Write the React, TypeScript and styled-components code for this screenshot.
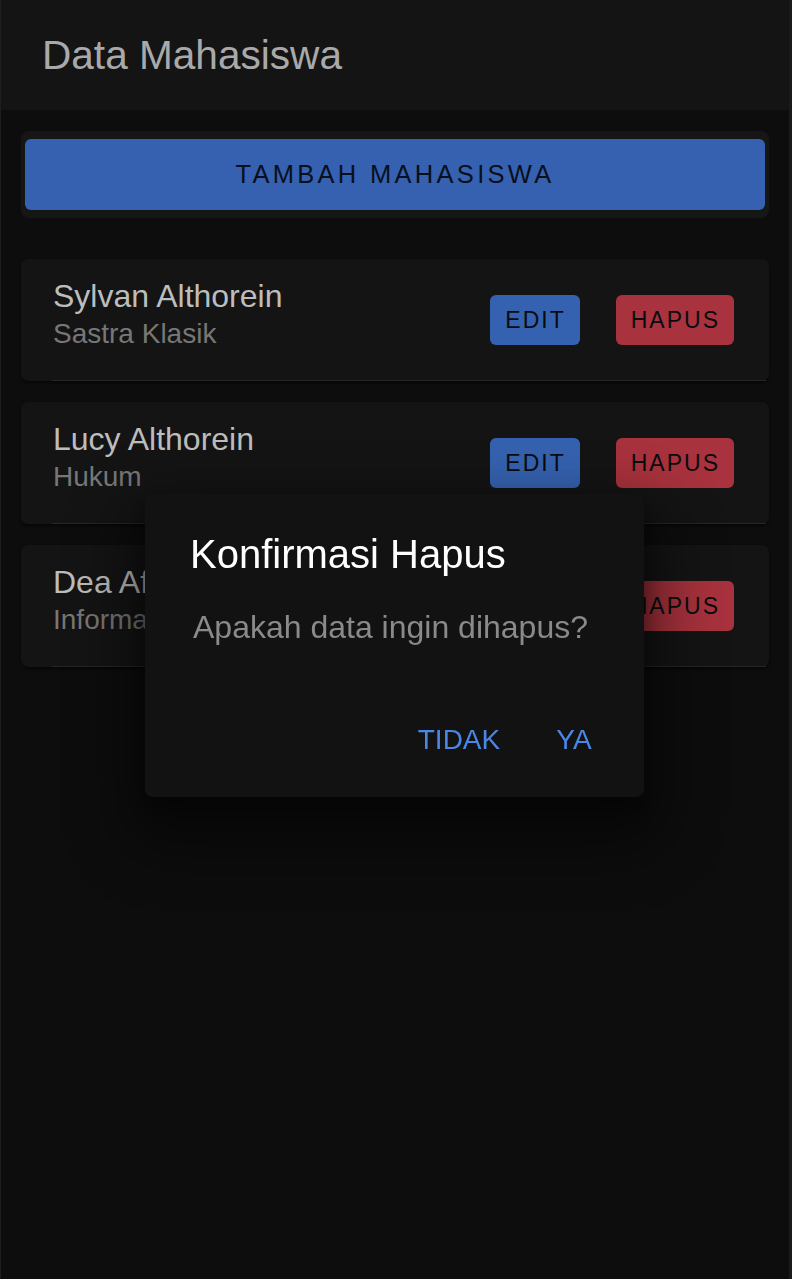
import React from "react";
import styled, { createGlobalStyle } from "styled-components";

const Global = createGlobalStyle`
  html, body { margin: 0; padding: 0; background: #0d0d0d; }
  body { font-family: "Liberation Sans", Arial, sans-serif; }
  * { box-sizing: border-box; }
`;

const Page = styled.div`
  min-height: 100vh;
  background: #0d0d0d;
  border-left: 1px solid #1e1e1e;
  border-right: 3px solid #1a1a1a;
`;

const Header = styled.header`
  height: 110px;
  background: #141414;
  display: flex;
  align-items: center;
  padding-left: 41px;
`;

const Title = styled.h1`
  margin: 0;
  font-size: 40.6px;
  line-height: 1;
  font-weight: 400;
  color: #a9a9a9;
`;

const Main = styled.main`
  padding: 21px 20px 0 20px;
  display: flex;
  flex-direction: column;
`;

const AddWrap = styled.div`
  background: #161616;
  border-radius: 8px;
  padding: 8px 4px;
  margin-bottom: 41px;
`;

const AddButton = styled.button`
  width: 100%;
  height: 71px;
  border: none;
  border-radius: 6px;
  background: #3561b0;
  color: #0a0f1c;
  font-family: inherit;
  font-size: 25.5px;
  letter-spacing: 3.3px;
  text-transform: uppercase;
  cursor: pointer;
`;

const List = styled.div`
  display: flex;
  flex-direction: column;
  gap: 21px;
`;

const Card = styled.div`
  position: relative;
  height: 122px;
  background: #141414;
  border-radius: 7px;
  display: flex;
  align-items: center;
  padding: 0 35px 0 32px;
  box-shadow: 0 2px 3px rgba(0, 0, 0, 0.5);
  &::after {
    content: "";
    position: absolute;
    left: 31px;
    right: 3px;
    bottom: 0;
    height: 1px;
    background: #262626;
  }
`;

const Info = styled.div`
  flex: 1;
  display: flex;
  flex-direction: column;
  margin-bottom: 4px;
`;

const Name = styled.div`
  font-size: 32px;
  line-height: 32px;
  color: #bdbdbd;
`;

const Sub = styled.div`
  font-size: 28px;
  line-height: 44px;
  color: #777777;
`;

const Actions = styled.div`
  display: flex;
  gap: 36px;
`;

const SmallButton = styled.button<{ $tone: "blue" | "red" }>`
  height: 50px;
  padding: 0 14px 0 15px;
  border: none;
  border-radius: 6px;
  background: ${(p) => (p.$tone === "blue" ? "#3562b0" : "#a8323d")};
  color: #0b0b0e;
  font-family: inherit;
  font-size: 23px;
  letter-spacing: 2px;
  cursor: pointer;
`;

const Overlay = styled.div`
  position: fixed;
  inset: 0;
  display: flex;
  align-items: flex-start;
  padding: 494px 0 0 145px;
`;

const Dialog = styled.div`
  width: 499px;
  background: #121212;
  border-radius: 8px;
  box-shadow: 0 30px 60px 20px rgba(0, 0, 0, 0.45), 0 10px 20px rgba(0, 0, 0, 0.4);
  display: flex;
  flex-direction: column;
  padding: 28px 14px 25px 45px;
`;

const DialogTitle = styled.h2`
  margin: 0;
  font-size: 40px;
  line-height: 64px;
  font-weight: 400;
  color: #ffffff;
`;

const DialogBody = styled.p`
  margin: 17px 0 0 3px;
  font-size: 32px;
  line-height: 48px;
  color: #8a8a8a;
`;

const DialogActions = styled.div`
  display: flex;
  justify-content: flex-end;
  gap: 3px;
  margin-top: 57px;
`;

const TextButton = styled.button`
  min-width: 112px;
  height: 64px;
  padding: 0 14px;
  border: none;
  background: transparent;
  color: #4a86e8;
  font-family: inherit;
  font-size: 28px;
  cursor: pointer;
`;

const students = [
  { name: "Sylvan Althorein", major: "Sastra Klasik" },
  { name: "Lucy Althorein", major: "Hukum" },
  { name: "Dea Afrizal", major: "Informatika" },
];

export default function App() {
  return (
    <>
      <Global />
      <Page>
        <Header>
          <Title>Data Mahasiswa</Title>
        </Header>
        <Main>
          <AddWrap>
            <AddButton>Tambah Mahasiswa</AddButton>
          </AddWrap>
          <List>
            {students.map((s) => (
              <Card key={s.name}>
                <Info>
                  <Name>{s.name}</Name>
                  <Sub>{s.major}</Sub>
                </Info>
                <Actions>
                  <SmallButton $tone="blue">EDIT</SmallButton>
                  <SmallButton $tone="red">HAPUS</SmallButton>
                </Actions>
              </Card>
            ))}
          </List>
        </Main>
        <Overlay>
          <Dialog>
            <DialogTitle>Konfirmasi Hapus</DialogTitle>
            <DialogBody>Apakah data ingin dihapus?</DialogBody>
            <DialogActions>
              <TextButton>TIDAK</TextButton>
              <TextButton>YA</TextButton>
            </DialogActions>
          </Dialog>
        </Overlay>
      </Page>
    </>
  );
}
